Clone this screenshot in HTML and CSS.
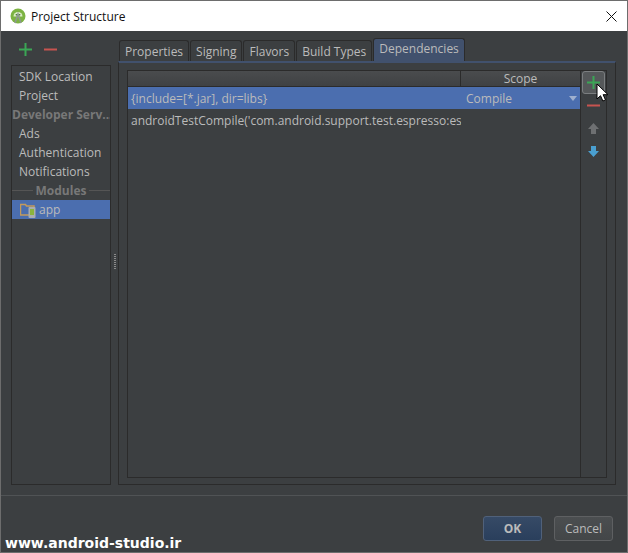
FILE: index.html
```html
<!DOCTYPE html>
<html lang="en">
<head>
<meta charset="utf-8">
<title>Project Structure</title>
<link rel="stylesheet" href="styles.css">
</head>
<body>
<div class="window">
  <header class="titlebar">
    <svg class="logo" width="16" height="16" viewBox="0 0 16 16"><circle cx="8" cy="8" r="7.5" fill="#7cb342"/><path d="M3.5 8.5a4.5 4.5 0 0 1 9 0z" fill="#dcedc8"/><path d="M5 15l3-9 3 9" fill="none" stroke="#8d9a8d" stroke-width="1.6"/><circle cx="6.3" cy="6.8" r=".7" fill="#33691e"/><circle cx="9.7" cy="6.8" r=".7" fill="#33691e"/></svg>
    <span class="title">Project Structure</span>
    <svg class="close" width="11" height="11" viewBox="0 0 11 11"><path d="M.5.5l10 10M10.5.5l-10 10" stroke="#111" stroke-width="1" fill="none"/></svg>
  </header>
  <div class="content">
    <aside class="sidebar">
      <div class="side-tools">
        <svg class="ico" width="13" height="13" viewBox="0 0 13 13"><path d="M5.5 0h2v5.5H13v2H7.500V13h-2V7.500H0v-2h5.500z" fill="#3aa655"/></svg>
        <svg class="ico" width="13" height="13" viewBox="0 0 13 13"><rect y="5.500" width="13" height="2" fill="#c75450"/></svg>
      </div>
      <nav class="side-list">
        <div class="item">SDK Location</div>
        <div class="item">Project</div>
        <div class="group">Developer Serv...</div>
        <div class="item">Ads</div>
        <div class="item">Authentication</div>
        <div class="item">Notifications</div>
        <div class="sep"><span>Modules</span></div>
        <div class="module">
          <svg width="16" height="16" viewBox="0 0 16 16"><path d="M.5 2.500h5l1 1.500h7.500v9H.5z" fill="none" stroke="#c49a5c" stroke-width="1.500"/><rect x="8.500" y="5" width="7" height="11" rx="1" fill="#a9adb0"/><rect x="10" y="7" width="4" height="6" fill="#8ab43c"/></svg>
          <span>app</span>
        </div>
      </nav>
    </aside>
    <div class="splitter"><i></i><i></i><i></i><i></i><i></i><i></i><i></i><i></i></div>
    <main class="tabs-area">
      <div class="tabs">
        <div class="tab">Properties</div>
        <div class="tab">Signing</div>
        <div class="tab">Flavors</div>
        <div class="tab">Build Types</div>
        <div class="tab active">Dependencies</div>
      </div>
      <section class="panel">
        <div class="frame">
          <div class="table">
            <div class="thead"><div class="th-name"></div><div class="th-scope">Scope</div></div>
            <div class="row selected"><div class="cell-name">{include=[*.jar], dir=libs}</div><div class="cell-scope">Compile<b class="caret"></b></div></div>
            <div class="row"><div class="cell-name">androidTestCompile('com.android.support.test.espresso:espresso-core:2.2.2')</div><div class="cell-scope"></div></div>
          </div>
          <div class="actions">
            <button class="act hover"><svg width="13" height="13" viewBox="0 0 13 13"><path d="M5.500 0h2v5.500H13v2H7.500V13h-2V7.500H0v-2h5.500z" fill="#3aa655"/></svg></button>
            <button class="act"><svg width="13" height="13" viewBox="0 0 13 13"><rect y="5.500" width="13" height="2" fill="#c75450"/></svg></button>
            <button class="act"><svg width="13" height="13" viewBox="0 0 13 13"><path d="M6.500 1L12 7H9v5H4V7H1z" fill="#6e7072"/></svg></button>
            <button class="act"><svg width="13" height="13" viewBox="0 0 13 13"><path d="M6.500 12L12 6H9V1H4v5H1z" fill="#4a9fd0"/></svg></button>
          </div>
        </div>
      </section>
    </main>
  </div>
  <footer class="footer">
    <button class="btn primary">OK</button>
    <button class="btn">Cancel</button>
  </footer>
  <div class="watermark">www.android-studio.ir</div>
  <svg class="cursor" width="13" height="19" viewBox="0 0 13 19"><path d="M1 1v15l3.500-3.300 2.400 5.300 2.600-1.100-2.400-5.200H12z" fill="#fff" stroke="#000" stroke-width="1"/></svg>
</div>
</body>
</html>
```
FILE: styles.css
```css
* { box-sizing: border-box; }
html, body { margin: 0; height: 100%; }
body { background: #3c3f41; font-family: "Open Sans", "Noto Sans", sans-serif; font-size: 12px; color: #bbbbbb; overflow: hidden; }
.window { position: relative; width: 628px; height: 553px; border: 1px solid #6d6d6d; display: flex; flex-direction: column; background: #3c3f41; }
.titlebar { height: 30px; background: #fff; display: flex; align-items: center; padding: 0 10px 0 9px; flex: none; }
.logo { flex: none; }
.title { margin-left: 5px; color: #111; font-size: 12px; flex: 1; }
.close { flex: none; }
.content { flex: 1; display: flex; padding: 7px 11px 10px 10px; min-height: 0; }
.sidebar { width: 100px; flex: none; display: flex; flex-direction: column; }
.side-tools { height: 27px; display: flex; align-items: center; gap: 12px; padding: 0 0 4px 8px; }
.side-list { flex: 1; border: 1px solid #2b2b2b; padding-top: 1px; }
.item, .group { height: 19px; line-height: 19px; white-space: nowrap; }
.item { padding-left: 7px; }
.group { color: #787878; font-weight: 700; padding-left: 0; overflow: hidden; }
.sep { height: 19px; display: flex; align-items: center; gap: 3px; color: #787878; font-weight: 700; }
.sep::before, .sep::after { content: ""; flex: 1; height: 1px; background: #555; }
.module { height: 19px; display: flex; align-items: center; gap: 3px; padding-left: 8px; background: #4b6eaf; }
.splitter { width: 7px; flex: none; display: flex; flex-direction: column; justify-content: center; align-items: center; gap: 1px; }
.splitter i { width: 2px; height: 1px; background: #8a8a8a; }
.tabs-area { flex: 1; display: flex; flex-direction: column; min-width: 0; }
.tabs { display: flex; gap: 1px; height: 23px; align-items: flex-end; padding-left: 1px; }
.tab { height: 21px; padding: 0 5px; line-height: 22px; border: 1px solid #2b2b2b; border-bottom: 0; border-radius: 3px 3px 0 0; white-space: nowrap; }
.tab.active { height: 23px; line-height: 19px; background: #41516d; margin-left: 0; }
.panel { flex: 1; border: 1px solid #2b2b2b; border-top: 2px solid #41516d; padding: 7px 8px 6px 8px; min-height: 0; display: flex; }
.frame { flex: 1; display: flex; border: 1px solid #2b2b2b; min-width: 0; }
.table { flex: 1; min-width: 0; }
.thead { height: 16px; display: flex; background: linear-gradient(#4a4c4e, #3f4143); border-bottom: 1px solid #2b2b2b; }
.th-name { width: 333px; border-right: 1px solid #2b2b2b; }
.th-scope { flex: 1; text-align: center; line-height: 16px; }
.row { height: 22px; display: flex; align-items: center; }
.row.selected { background: #4b6eaf; }
.cell-name { width: 333px; padding-left: 3px; overflow: hidden; white-space: nowrap; }
.cell-scope { flex: 1; padding-left: 5px; display: flex; justify-content: space-between; align-items: center; padding-right: 3px; }
.caret { width: 0; height: 0; border: 4px solid transparent; border-top: 5px solid #9fb0cf; border-bottom: 0; }
.actions { width: 26px; flex: none; border-left: 1px solid #2b2b2b; display: flex; flex-direction: column; align-items: center; }
.act { width: 23px; height: 23px; padding: 0; background: none; border: 1px solid transparent; border-radius: 3px; display: flex; align-items: center; justify-content: center; }
.act.hover { background: #55585a; border-color: #7b7e80; }
.footer { height: 57px; flex: none; border-top: 1px solid #505355; display: flex; justify-content: flex-end; align-items: flex-start; padding: 20px 14px 0 0; gap: 12px; }
.btn { width: 59px; height: 25px; padding: 0; font: inherit; color: #bbbbbb; border: 1px solid #5e6062; border-radius: 3px; background: linear-gradient(#4b4e50, #434648); }
.btn.primary { font-weight: 700; background: linear-gradient(#364a66, #2a3f5c); border-color: #50617a; }
.watermark { position: absolute; left: 4px; bottom: 1px; color: #fff; font: 700 14px "DejaVu Sans", sans-serif; }
.cursor { position: absolute; left: 595px; top: 82px; }
```
